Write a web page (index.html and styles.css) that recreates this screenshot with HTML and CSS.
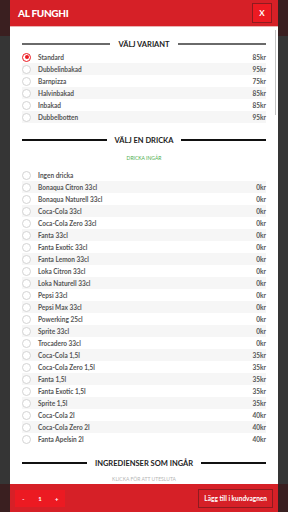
FILE: index.html
```html
<!DOCTYPE html>
<html lang="sv">
<head>
  <meta charset="UTF-8" />
  <meta name="viewport" content="width=device-width, initial-scale=1.0"/>
  <title>Al Funghi</title>
  <link rel="stylesheet" href="styles.css">
</head>
<body>

<div class="modal">
  <div class="modal-head">
    <h1>AL FUNGHI</h1>
    <span class="close-btn">X</span>
  </div>

  <div class="modal-body">
    <div class="scroll-thumb"></div>

    <h2 class="section-title">VÄLJ VARIANT</h2>
    <ul class="options">
      <li class="option"><span class="radio checked"></span><span class="name">Standard</span><span class="price">85kr</span></li>
      <li class="option"><span class="radio"></span><span class="name">Dubbelinbakad</span><span class="price">95kr</span></li>
      <li class="option"><span class="radio"></span><span class="name">Barnpizza</span><span class="price">75kr</span></li>
      <li class="option"><span class="radio"></span><span class="name">Halvinbakad</span><span class="price">85kr</span></li>
      <li class="option"><span class="radio"></span><span class="name">Inbakad</span><span class="price">85kr</span></li>
      <li class="option"><span class="radio"></span><span class="name">Dubbelbotten</span><span class="price">95kr</span></li>
    </ul>

    <h2 class="section-title dark">VÄLJ EN DRICKA</h2>
    <p class="note note-green">DRICKA INGÅR</p>
    <ul class="options">
      <li class="option"><span class="radio"></span><span class="name">Ingen dricka</span><span class="price"></span></li>
      <li class="option"><span class="radio"></span><span class="name">Bonaqua Citron 33cl</span><span class="price">0kr</span></li>
      <li class="option"><span class="radio"></span><span class="name">Bonaqua Naturell 33cl</span><span class="price">0kr</span></li>
      <li class="option"><span class="radio"></span><span class="name">Coca-Cola 33cl</span><span class="price">0kr</span></li>
      <li class="option"><span class="radio"></span><span class="name">Coca-Cola Zero 33cl</span><span class="price">0kr</span></li>
      <li class="option"><span class="radio"></span><span class="name">Fanta 33cl</span><span class="price">0kr</span></li>
      <li class="option"><span class="radio"></span><span class="name">Fanta Exotic 33cl</span><span class="price">0kr</span></li>
      <li class="option"><span class="radio"></span><span class="name">Fanta Lemon 33cl</span><span class="price">0kr</span></li>
      <li class="option"><span class="radio"></span><span class="name">Loka Citron 33cl</span><span class="price">0kr</span></li>
      <li class="option"><span class="radio"></span><span class="name">Loka Naturell 33cl</span><span class="price">0kr</span></li>
      <li class="option"><span class="radio"></span><span class="name">Pepsi 33cl</span><span class="price">0kr</span></li>
      <li class="option"><span class="radio"></span><span class="name">Pepsi Max 33cl</span><span class="price">0kr</span></li>
      <li class="option"><span class="radio"></span><span class="name">Powerking 25cl</span><span class="price">0kr</span></li>
      <li class="option"><span class="radio"></span><span class="name">Sprite 33cl</span><span class="price">0kr</span></li>
      <li class="option"><span class="radio"></span><span class="name">Trocadero 33cl</span><span class="price">0kr</span></li>
      <li class="option"><span class="radio"></span><span class="name">Coca-Cola 1,5l</span><span class="price">35kr</span></li>
      <li class="option"><span class="radio"></span><span class="name">Coca-Cola Zero 1,5l</span><span class="price">35kr</span></li>
      <li class="option"><span class="radio"></span><span class="name">Fanta 1,5l</span><span class="price">35kr</span></li>
      <li class="option"><span class="radio"></span><span class="name">Fanta Exotic 1,5l</span><span class="price">35kr</span></li>
      <li class="option"><span class="radio"></span><span class="name">Sprite 1,5l</span><span class="price">35kr</span></li>
      <li class="option"><span class="radio"></span><span class="name">Coca-Cola 2l</span><span class="price">40kr</span></li>
      <li class="option"><span class="radio"></span><span class="name">Coca-Cola Zero 2l</span><span class="price">40kr</span></li>
      <li class="option"><span class="radio"></span><span class="name">Fanta Apelsin 2l</span><span class="price">40kr</span></li>
    </ul>

    <h2 class="section-title dark last">INGREDIENSER SOM INGÅR</h2>
    <p class="note note-grey">KLICKA FÖR ATT UTESLUTA</p>
  </div>

  <div class="modal-foot">
    <div class="qty">
      <span class="qty-btn">-</span>
      <span class="qty-val">1</span>
      <span class="qty-btn">+</span>
    </div>
    <button class="add-btn">Lägg till i kundvagnen</button>
  </div>
</div>

</body>
</html>
```

FILE: styles.css
```css
:root {
  --red: #d62027;
  --red-light: #ec1a22;
  --red-dark: #8e1b1f;
  --text: #555;
  --stripe: #f6f6f6;
}

* {
  box-sizing: border-box;
  margin: 0;
  padding: 0;
}

body {
  font-family: Lato, "Open Sans", sans-serif;
  height: 512px;
  overflow: hidden;
  background: linear-gradient(to bottom,
    #3a1f20 0, #3a1f20 36px,
    #353535 36px, #353535 484px,
    #3a1f20 484px);
  padding: 0 10px;
}

.modal {
  height: 512px;
  display: flex;
  flex-direction: column;
  background: #fff;
}

/* header */
.modal-head {
  height: 27px;
  background: var(--red);
  border-bottom: 1px solid #eab3b3;
  display: flex;
  align-items: center;
  justify-content: space-between;
  padding: 0 6px 0 8px;
}

.modal-head h1 {
  color: #fff;
  font-size: 10px;
  font-weight: 900;
  letter-spacing: -0.3px;
}

.close-btn {
  width: 20px;
  height: 20px;
  background: var(--red-light);
  border: 1px solid var(--red-dark);
  color: #fff;
  font-size: 8px;
  font-weight: 700;
  display: flex;
  align-items: center;
  justify-content: center;
}

/* body */
.modal-body {
  flex: 1;
  overflow: hidden;
  position: relative;
  padding: 0 12px;
}

.scroll-thumb {
  position: absolute;
  right: 2px;
  top: 3px;
  width: 1.5px;
  height: 85px;
  background: #c4c4c4;
}

.section-title {
  display: flex;
  align-items: center;
  gap: 8px;
  height: 14px;
  margin-top: 10px;
  font-size: 7.5px;
  font-weight: 700;
  color: #222;
}

.section-title::before,
.section-title::after {
  content: '';
  flex: 1;
  height: 2px;
  background: #6a6a6a;
}

.section-title.dark::before,
.section-title.dark::after {
  background: #111;
}

.section-title.last {
  margin-top: 11px;
}

.note {
  text-align: center;
  font-size: 5px;
  height: 22px;
  line-height: 22px;
}

.note-green {
  color: #4cae4c;
}

.note-grey {
  color: #b5b5b5;
  height: 18px;
  line-height: 18px;
}

.options {
  list-style: none;
}

.option {
  height: 12px;
  display: flex;
  align-items: center;
  font-size: 6.5px;
  font-weight: 700;
  color: var(--text);
}

.option:nth-child(even) {
  background: var(--stripe);
}

.radio {
  width: 9px;
  height: 9px;
  border: 1px solid #d4d4d4;
  border-radius: 50%;
  background: #fff;
  margin-right: 7px;
  position: relative;
}

.radio.checked {
  border-color: var(--red-light);
}

.radio.checked::after {
  content: '';
  position: absolute;
  top: 1.5px;
  left: 1.5px;
  width: 4px;
  height: 4px;
  border-radius: 50%;
  background: var(--red-light);
}

.name {
  flex: 1;
}

/* footer */
.modal-foot {
  height: 28px;
  background: var(--red);
  display: flex;
  align-items: center;
  justify-content: space-between;
  padding: 0 5px;
}

.qty {
  display: flex;
  width: 50px;
  height: 17px;
  background: var(--red-light);
}

.qty span {
  flex: 1;
  display: flex;
  align-items: center;
  justify-content: center;
  color: #fff;
  font-size: 6px;
  font-weight: 700;
}

.add-btn {
  height: 19px;
  padding: 0 5px;
  background: var(--red);
  border: 1px solid var(--red-dark);
  color: #fff;
  font-family: inherit;
  font-size: 6.5px;
  font-weight: 700;
  cursor: pointer;
}
```
